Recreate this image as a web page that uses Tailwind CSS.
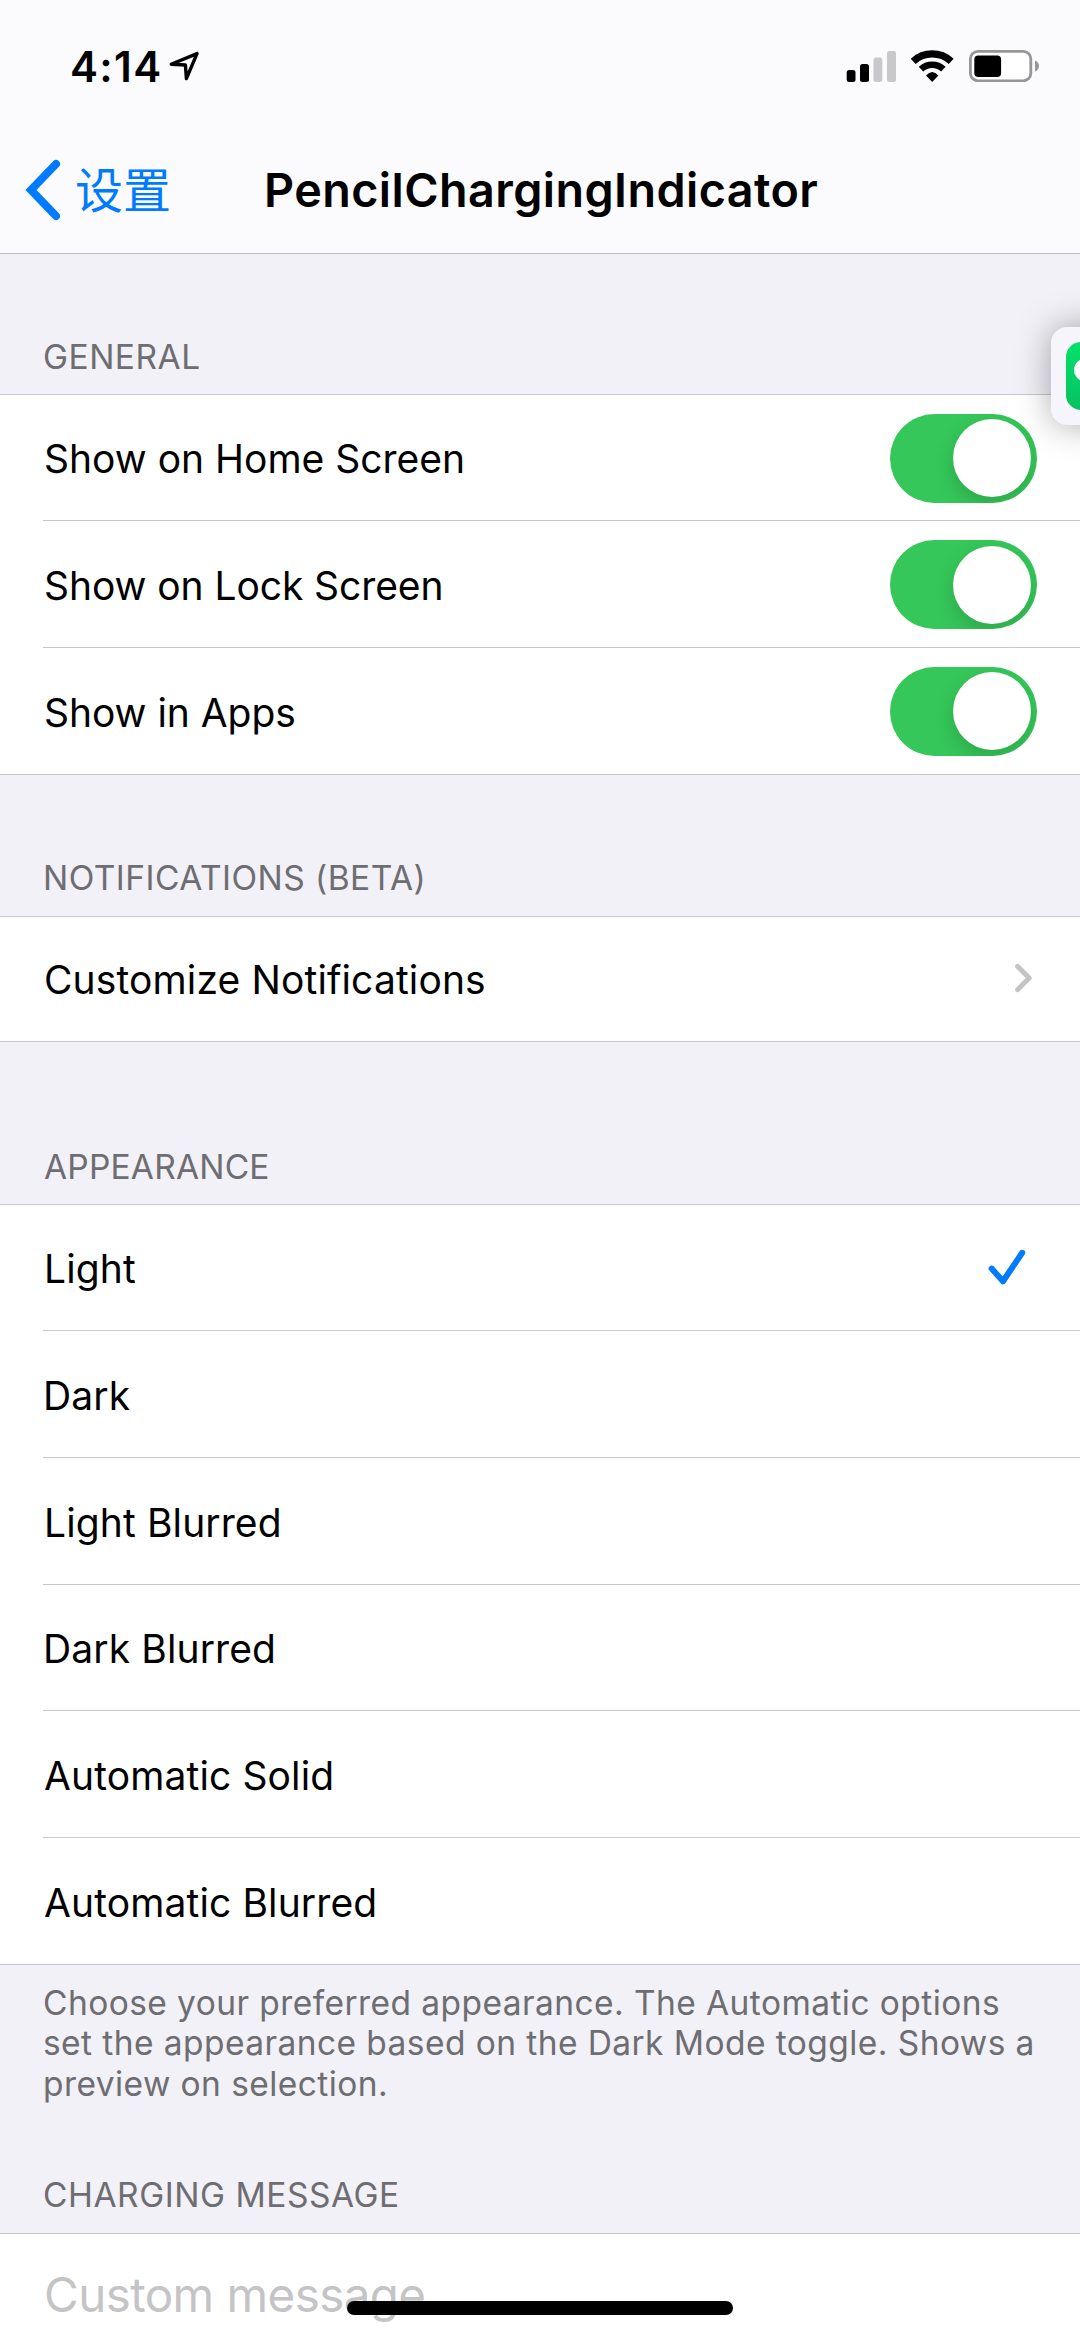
<!DOCTYPE html>
<html lang="en">
<head>
<meta charset="utf-8">
<title>PencilChargingIndicator</title>
<script src="https://cdn.jsdelivr.net/npm/@tailwindcss/browser@4"></script>
</head>
<body class="bg-[#f2f1f7]">
<div class="relative flex h-[2338px] w-[1080px] flex-col overflow-hidden bg-[#f2f1f7] font-['Inter','Noto_Sans_CJK_SC',sans-serif] text-black">

  <!-- Status bar and navigation bar -->
  <header class="flex h-[254px] shrink-0 flex-col border-b border-[#bfbfc3] bg-[#fbfbfd]">
    <div class="flex h-[132px] items-center justify-between pr-[40px] pl-[70px]">
      <div class="flex items-center gap-[6px]">
        <span class="pt-px text-[42px] leading-[50px] font-semibold tracking-[1.36px]">4:14</span>
        <svg class="h-[32px] w-[32px]" viewBox="0 0 32 32" fill="none" stroke="#000" stroke-width="3.4" stroke-linejoin="round"><path d="M2.2 14.2 28 3.6 17.4 28.6 16.4 15Z"/></svg>
      </div>
      <div class="flex h-[32px]">
        <svg class="h-[32px] w-[194px]" viewBox="846 50 194 32">
          <rect x="846.7" y="70" width="8.8" height="12" rx="2.5"/>
          <rect x="860" y="64" width="9" height="18" rx="2.5"/>
          <rect x="873.5" y="57.5" width="8.8" height="24.5" rx="2.5" fill="#c8c8ca"/>
          <rect x="887" y="51" width="9" height="31" rx="2.5" fill="#c8c8ca"/>
          <path d="M913.2 61.3A28 28 0 0 1 951.2 61.3" fill="none" stroke="#000" stroke-width="7.2"/>
          <path d="M921 69.2A16.5 16.5 0 0 1 943.4 69.2" fill="none" stroke="#000" stroke-width="6.6"/>
          <path d="M932.2 82 926 75.4Q932.2 68.4 938.4 75.4Z"/>
          <rect x="970.4" y="51.4" width="60.4" height="29.4" rx="7.5" fill="#fff" stroke="#969698" stroke-width="2.8"/>
          <rect x="974.3" y="55.5" width="26.8" height="21.4" rx="4"/>
          <path d="M1035 60.5Q1039 62.5 1039 66T1035 71.7Z" fill="#969698"/>
        </svg>
      </div>
    </div>
    <div class="grid h-[116px] grid-cols-[264px_1fr_264px] items-center">
      <div class="flex items-center gap-[14px] pl-[23px] text-[#007aff]">
        <svg class="h-[64px] w-[38px]" viewBox="0 0 38 64" fill="none" stroke="currentColor" stroke-width="8" stroke-linecap="round"><path d="M33 6 8 32 33 58"/></svg>
        <span class="pt-[2px] text-[48px] leading-[56px] whitespace-nowrap">设置</span>
      </div>
      <h1 class="text-center text-[46.7px] leading-[56px] font-semibold tracking-[0.43px] whitespace-nowrap">PencilChargingIndicator</h1>
    </div>
  </header>

  <!-- General -->
  <h2 class="flex h-[140px] shrink-0 items-end pb-[17px] pl-[43px] text-[33.5px] leading-[40px] tracking-[0.5px] text-[#6d6d72]">GENERAL</h2>
  <ul class="flex shrink-0 flex-col border-y border-[#c8c8cc] bg-white pl-[43px] text-[39px] leading-[48px]">
    <li class="flex h-[126px] items-center justify-between border-b border-[#c8c8ca] pr-[43px]"><span class="pt-[3px] pl-px">Show on Home Screen</span><span class="mt-px flex h-[89px] w-[147px] items-center justify-end overflow-hidden rounded-full bg-[#35c759] pr-[6px]"><span class="size-[78px] rounded-full bg-white shadow-[0_8px_20px_rgba(0,0,0,0.16)]"></span></span></li>
    <li class="flex h-[127px] items-center justify-between border-b border-[#c8c8ca] pr-[43px]"><span class="pt-[3px] pl-px tracking-[-0.08px]">Show on Lock Screen</span><span class="mt-px flex h-[89px] w-[147px] items-center justify-end overflow-hidden rounded-full bg-[#35c759] pr-[6px]"><span class="size-[78px] rounded-full bg-white shadow-[0_8px_20px_rgba(0,0,0,0.16)]"></span></span></li>
    <li class="flex h-[126px] items-center justify-between pr-[43px]"><span class="pt-[3px] pl-px tracking-[-0.05px]">Show in Apps</span><span class="flex h-[89px] w-[147px] items-center justify-end overflow-hidden rounded-full bg-[#35c759] pr-[6px]"><span class="size-[78px] rounded-full bg-white shadow-[0_8px_20px_rgba(0,0,0,0.16)]"></span></span></li>
  </ul>

  <!-- Notifications -->
  <h2 class="flex h-[141px] shrink-0 items-end pb-[18px] pl-[43px] text-[33.5px] leading-[40px] tracking-[0.45px] text-[#6d6d72]">NOTIFICATIONS (BETA)</h2>
  <ul class="flex shrink-0 flex-col border-y border-[#c8c8cc] bg-white pl-[43px] text-[39px] leading-[48px] tracking-[0.13px]">
    <li class="flex h-[124px] items-center justify-between pr-[47px]"><span class="pt-[2px] pl-px">Customize Notifications</span><svg class="mb-[2px] h-[30px] w-[20px]" viewBox="0 0 20 30" fill="none" stroke="#c4c4c6" stroke-width="5" stroke-linecap="round" stroke-linejoin="round"><path d="M4.7 3.4 16.2 15 4.7 26.6"/></svg></li>
  </ul>

  <!-- Appearance -->
  <h2 class="flex h-[162px] shrink-0 items-end pb-[17px] pl-[44px] text-[33.5px] leading-[40px] tracking-[0.2px] text-[#6d6d72]">APPEARANCE</h2>
  <ul class="flex shrink-0 flex-col border-y border-[#c8c8cc] bg-white pl-[43px] text-[39px] leading-[48px] tracking-[0.12px]">
    <li class="flex h-[126px] items-center justify-between border-b border-[#c8c8ca] pr-[54px]"><span class="pt-[3px] pl-px">Light</span><svg class="mb-[1px] h-[36px] w-[38px]" viewBox="0 0 38 36" fill="none" stroke="#007aff" stroke-width="6" stroke-linecap="round" stroke-linejoin="round"><path d="M3.6 19.6 15 32.2 34.2 3.8"/></svg></li>
    <li class="flex h-[127px] items-center border-b border-[#c8c8ca]"><span class="pt-[3px]">Dark</span></li>
    <li class="flex h-[127px] items-center border-b border-[#c8c8ca]"><span class="pt-[3px] pl-px">Light Blurred</span></li>
    <li class="flex h-[126px] items-center border-b border-[#c8c8ca]"><span class="pt-[3px]">Dark Blurred</span></li>
    <li class="flex h-[127px] items-center border-b border-[#c8c8ca]"><span class="pt-[3px] pl-px">Automatic Solid</span></li>
    <li class="flex h-[126px] items-center"><span class="pt-[3px] pl-px">Automatic Blurred</span></li>
  </ul>
  <p class="h-[138px] shrink-0 pt-[18px] pl-[43px] text-[33.5px] leading-[40.3px] tracking-[0.43px] whitespace-nowrap text-[#6d6d72]">Choose your preferred appearance. The Automatic options<br>set the appearance based on the Dark Mode toggle. Shows a<br>preview on selection.</p>

  <!-- Charging message -->
  <h2 class="flex h-[130px] shrink-0 items-end pb-[18px] pl-[43px] text-[33.5px] leading-[40px] tracking-[0.53px] text-[#6d6d72]">CHARGING MESSAGE</h2>
  <div class="h-[105px] shrink-0 border-t border-[#c8c8cc] bg-white pt-[31px] pl-[44px] text-[47.5px] leading-[60px] tracking-[-0.56px] text-[#c4c4c6]">Custom message</div>

  <!-- Floating app shortcut at the screen edge -->
  <div class="absolute top-[327px] left-[1051px] flex h-[98px] w-[98px] items-center rounded-[16px] bg-[#f5f5fb] pl-[15px] shadow-[0_0_34px_rgba(0,0,0,0.34)]">
    <svg class="h-[68px] w-[68px]" viewBox="0 0 68 68">
      <defs><linearGradient id="g" x1="0" y1="0" x2="0" y2="1"><stop offset="0" stop-color="#05e06b"/><stop offset="1" stop-color="#07c160"/></linearGradient></defs>
      <rect width="68" height="68" rx="15" fill="url(#g)"/>
      <ellipse cx="25" cy="28" rx="17" ry="13.5" fill="#fff"/>
    </svg>
  </div>

  <!-- Home indicator -->
  <div class="absolute top-[2301px] left-[347px] h-[14px] w-[386px] rounded-full bg-black"></div>
</div>
</body>
</html>
